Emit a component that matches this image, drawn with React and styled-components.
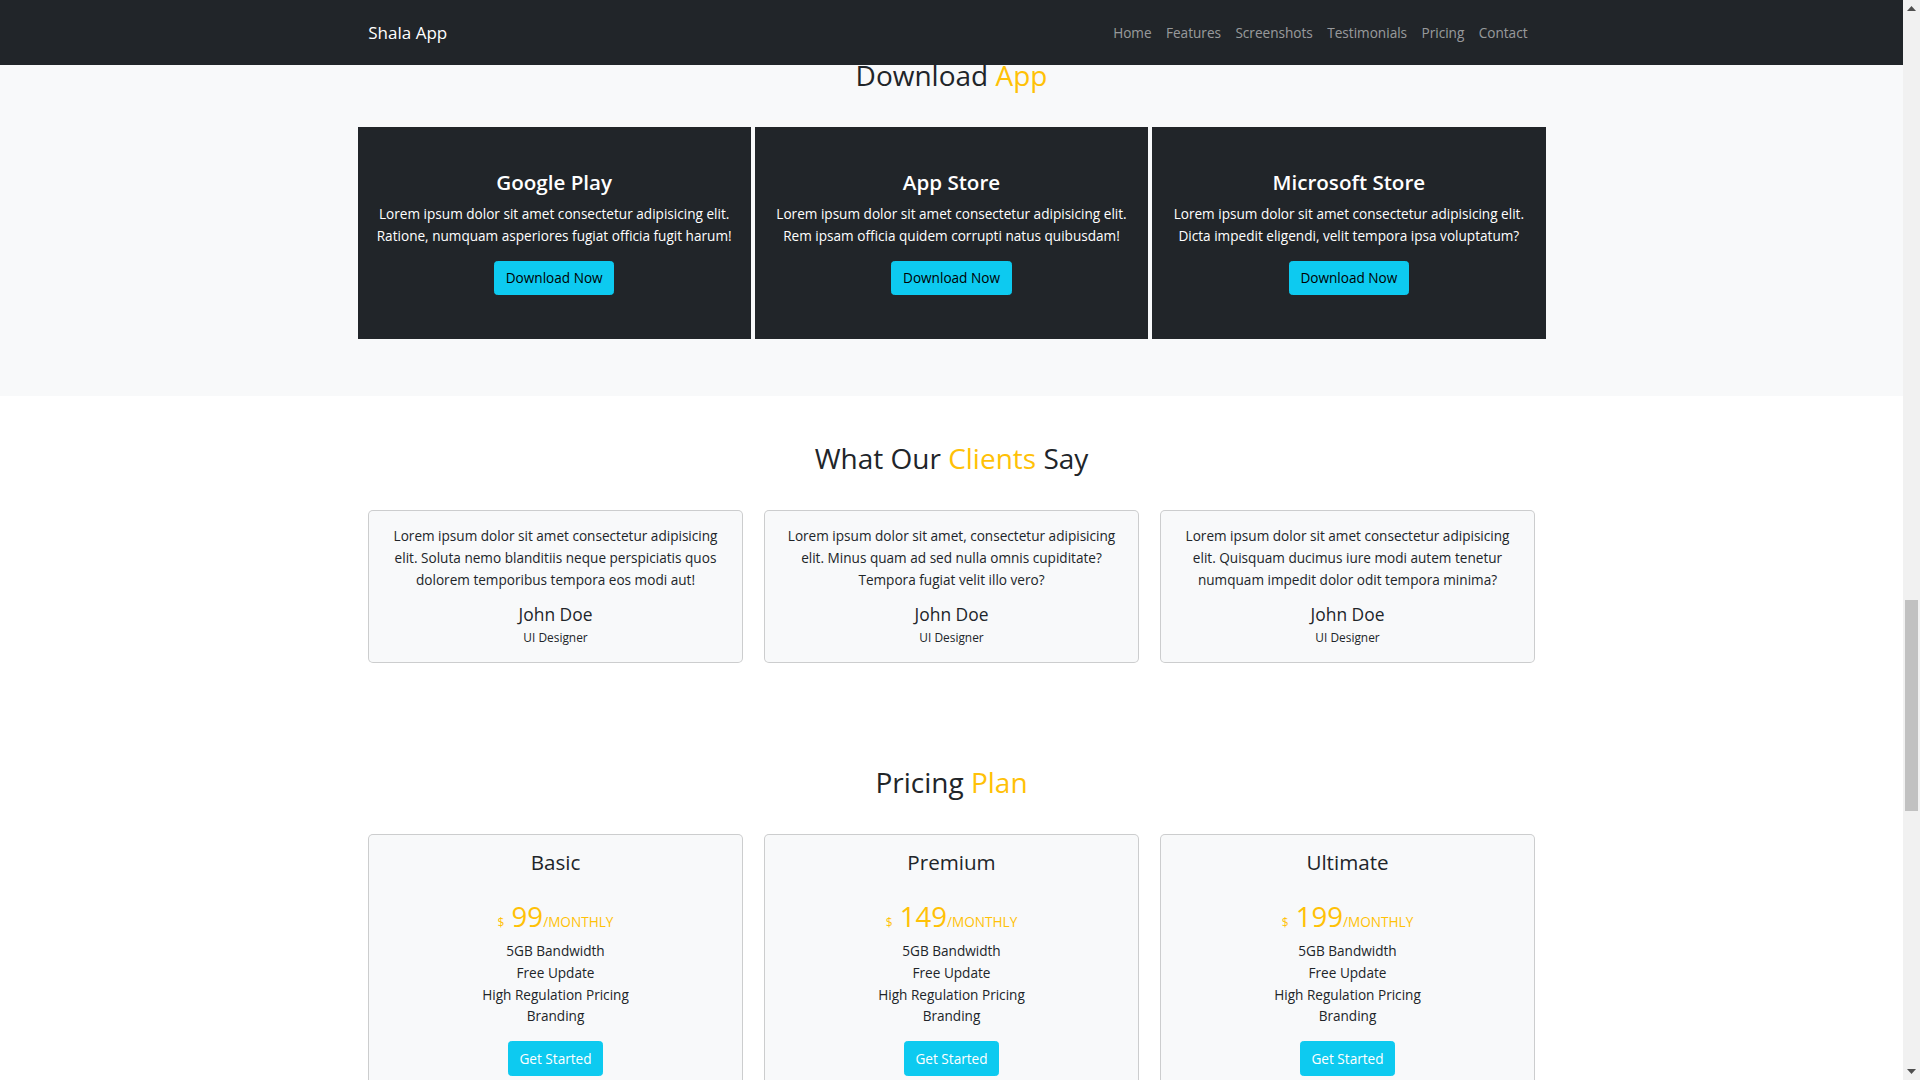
import React from "react";
import styled, { createGlobalStyle } from "styled-components";

const GlobalStyle = createGlobalStyle`
  *, *::before, *::after { box-sizing: border-box; }
  html, body { margin: 0; padding: 0; }
  body {
    font-family: "Open Sans", "Noto Sans", sans-serif;
    font-size: 13.6px;
    line-height: 21.6px;
    color: #212529;
    background: #fff;
  }
  h1, h2, h3, h4, h5, p, ul { margin: 0; }
`;

const SCROLLBAR = 17;

const Page = styled.main`
  margin-right: ${SCROLLBAR}px;
`;

const Navbar = styled.nav`
  position: fixed;
  top: 0;
  left: 0;
  right: ${SCROLLBAR}px;
  z-index: 10;
  height: 64.8px;
  background: #212529;
`;

const Container = styled.div`
  max-width: 1188px;
  margin: 0 auto;
  padding: 0 ${(p) => (p.$flush ? "0" : "10.8px")};
`;

const NavInner = styled(Container)`
  height: 100%;
  display: flex;
  align-items: center;
  justify-content: space-between;
`;

const Brand = styled.a`
  color: #fff;
  font-size: 17px;
  line-height: 27px;
  text-decoration: none;
`;

const NavList = styled.ul`
  display: flex;
  list-style: none;
  padding: 0;
`;

const NavLink = styled.a`
  display: block;
  padding: 0 7.2px;
  color: rgba(255, 255, 255, 0.55);
  font-size: 13.6px;
  line-height: 21.6px;
  text-decoration: none;
`;

const ScrollTrack = styled.aside`
  position: fixed;
  top: 0;
  right: 0;
  bottom: 0;
  width: ${SCROLLBAR}px;
  z-index: 20;
  background: #f1f1f1;
  display: flex;
  flex-direction: column;
`;

const ScrollArrow = styled.div`
  height: ${SCROLLBAR}px;
  display: flex;
  align-items: center;
  justify-content: center;
`;

const ScrollRail = styled.div`
  flex: 1;
  position: relative;
`;

const ScrollThumb = styled.div`
  position: absolute;
  left: 2px;
  right: 2px;
  top: 583px;
  height: 211px;
  background: #c1c1c1;
`;

const Section = styled.section`
  background: ${(p) => (p.$light ? "#f8f9fa" : "#fff")};
  padding-top: ${(p) => p.$top}px;
  padding-bottom: ${(p) => p.$bottom}px;
`;

const SectionTitle = styled.h2`
  font-size: 28px;
  line-height: 34.56px;
  font-weight: 500;
  text-align: center;
  color: #212529;
  margin-bottom: 35px;
`;

const Accent = styled.span`
  color: #ffc107;
`;

const StoreGrid = styled.div`
  display: grid;
  grid-template-columns: repeat(3, 1fr);
  gap: 4px;
`;

const StoreCard = styled.div`
  background: #212529;
  color: #fff;
  text-align: center;
  padding: 43.2px 8px;
`;

const StoreName = styled.h4`
  font-size: 20.6px;
  line-height: 25.92px;
  font-weight: 600;
  margin-bottom: 7.2px;
`;

const StoreText = styled.p`
  font-size: 13.6px;
  line-height: 21.6px;
  margin-bottom: 14.4px;
`;

const Button = styled.a`
  display: inline-block;
  padding: 5.4px 10.8px;
  font-size: 13.6px;
  line-height: 21.6px;
  border: 0.9px solid #0dcaf0;
  background: #0dcaf0;
  color: ${(p) => (p.$light ? "#fff" : "#000")};
  border-radius: 3.4px;
  text-decoration: none;
  cursor: pointer;
`;

const CardGrid = styled.div`
  display: grid;
  grid-template-columns: repeat(3, 1fr);
  gap: 21.6px;
`;

const Card = styled.div`
  background: #f8f9fa;
  border: 1px solid rgba(0, 0, 0, 0.175);
  border-radius: 5px;
  padding: 14.4px;
  text-align: center;
`;

const Quote = styled.p`
  margin-bottom: 14px;
`;

const Name = styled.h5`
  font-size: 17.4px;
  line-height: 21.6px;
  font-weight: 500;
`;

const Role = styled.small`
  display: block;
  font-size: 11.9px;
  line-height: 22.2px;
`;

const PlanName = styled.h4`
  font-size: 20.6px;
  line-height: 25.92px;
  font-weight: 500;
  margin-bottom: 23px;
`;

const Price = styled.h2`
  font-size: 27.6px;
  line-height: 34.56px;
  font-weight: 500;
  color: #ffc107;
  margin-bottom: 1.3px;
`;

const Currency = styled.small`
  font-size: 11.9px;
`;

const Period = styled.span`
  font-size: 13.6px;
  text-transform: uppercase;
`;

const Features = styled.ul`
  list-style: none;
  padding: 0;
  margin-bottom: 14.4px;
`;

const navItems = ["Home", "Features", "Screenshots", "Testimonials", "Pricing", "Contact"];

const stores = [
  {
    name: "Google Play",
    text: "Lorem ipsum dolor sit amet consectetur adipisicing elit. Ratione, numquam asperiores fugiat officia fugit harum!",
  },
  {
    name: "App Store",
    text: "Lorem ipsum dolor sit amet consectetur adipisicing elit. Rem ipsam officia quidem corrupti natus quibusdam!",
  },
  {
    name: "Microsoft Store",
    text: "Lorem ipsum dolor sit amet consectetur adipisicing elit. Dicta impedit eligendi, velit tempora ipsa voluptatum?",
  },
];

const testimonials = [
  "Lorem ipsum dolor sit amet consectetur adipisicing elit. Soluta nemo blanditiis neque perspiciatis quos dolorem temporibus tempora eos modi aut!",
  "Lorem ipsum dolor sit amet, consectetur adipisicing elit. Minus quam ad sed nulla omnis cupiditate? Tempora fugiat velit illo vero?",
  "Lorem ipsum dolor sit amet consectetur adipisicing elit. Quisquam ducimus iure modi autem tenetur numquam impedit dolor odit tempora minima?",
];

const plans = [
  { name: "Basic", price: "99" },
  { name: "Premium", price: "149" },
  { name: "Ultimate", price: "199" },
];

const features = ["5GB Bandwidth", "Free Update", "High Regulation Pricing", "Branding"];

function Arrow({ down }) {
  return (
    <svg width="9" height="5" viewBox="0 0 9 5" aria-hidden="true">
      <polygon points={down ? "0,0 9,0 4.5,5" : "0,5 9,5 4.5,0"} fill="#505050" />
    </svg>
  );
}

export default function App() {
  return (
    <>
      <GlobalStyle />
      <Navbar>
        <NavInner>
          <Brand href="#">Shala App</Brand>
          <NavList>
            {navItems.map((n) => (
              <li key={n}>
                <NavLink href="#">{n}</NavLink>
              </li>
            ))}
          </NavList>
        </NavInner>
      </Navbar>

      <ScrollTrack aria-hidden="true">
        <ScrollArrow>
          <Arrow />
        </ScrollArrow>
        <ScrollRail>
          <ScrollThumb />
        </ScrollRail>
        <ScrollArrow>
          <Arrow down />
        </ScrollArrow>
      </ScrollTrack>

      <Page>
        <Section $light $top={57.5} $bottom={57}>
          <Container $flush>
            <SectionTitle>
              Download <Accent>App</Accent>
            </SectionTitle>
            <StoreGrid>
              {stores.map((s) => (
                <StoreCard key={s.name}>
                  <StoreName>{s.name}</StoreName>
                  <StoreText>{s.text}</StoreText>
                  <Button>Download Now</Button>
                </StoreCard>
              ))}
            </StoreGrid>
          </Container>
        </Section>

        <Section $top={45} $bottom={56.3}>
          <Container>
            <SectionTitle>
              What Our <Accent>Clients</Accent> Say
            </SectionTitle>
            <CardGrid>
              {testimonials.map((t, i) => (
                <Card key={i}>
                  <Quote>{t}</Quote>
                  <Name>John Doe</Name>
                  <Role>UI Designer</Role>
                </Card>
              ))}
            </CardGrid>
          </Container>
        </Section>

        <Section $top={45} $bottom={43.2}>
          <Container>
            <SectionTitle>
              Pricing <Accent>Plan</Accent>
            </SectionTitle>
            <CardGrid>
              {plans.map((p) => (
                <Card key={p.name}>
                  <PlanName>{p.name}</PlanName>
                  <Price>
                    <Currency>$</Currency> {p.price}
                    <Period>/Monthly</Period>
                  </Price>
                  <Features>
                    {features.map((f) => (
                      <li key={f}>{f}</li>
                    ))}
                  </Features>
                  <Button $light>Get Started</Button>
                </Card>
              ))}
            </CardGrid>
          </Container>
        </Section>
      </Page>
    </>
  );
}
